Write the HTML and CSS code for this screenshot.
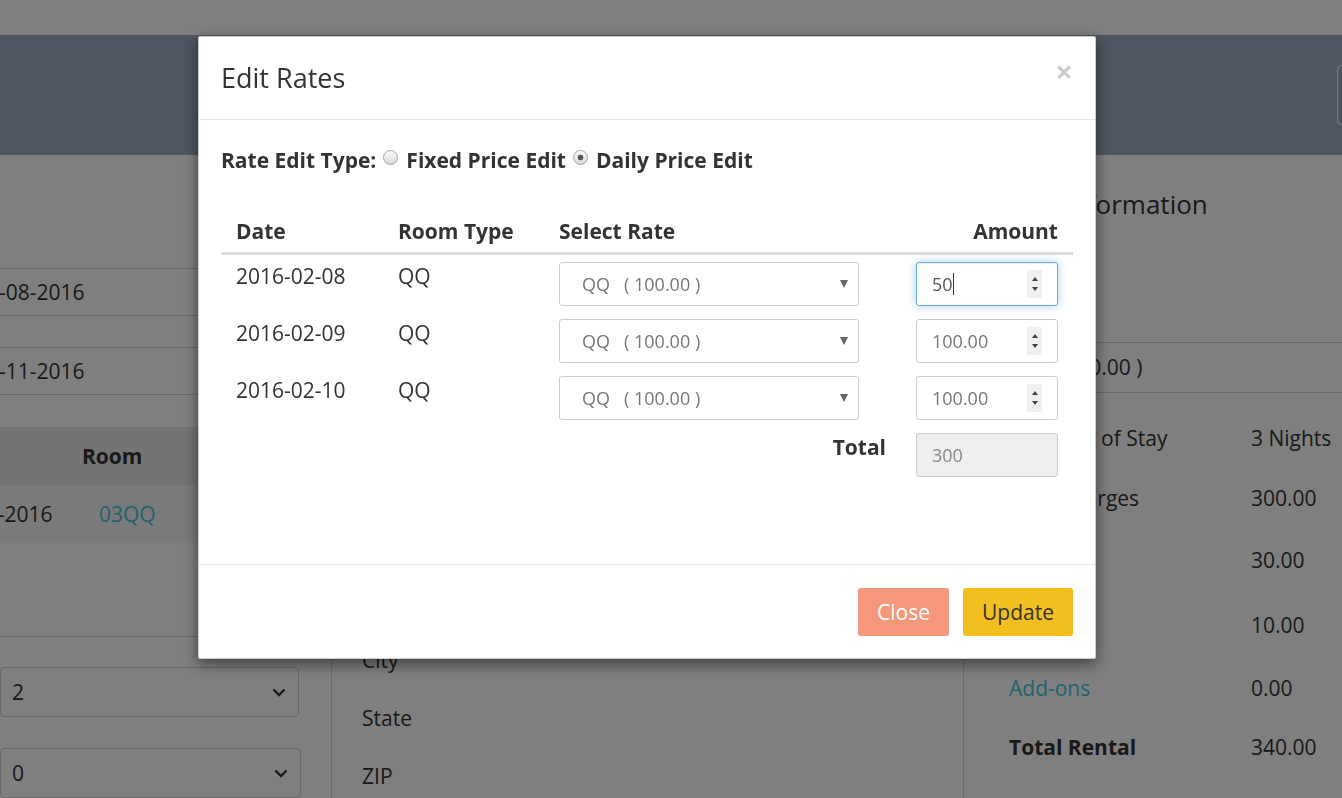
FILE: index.html
```html
<!DOCTYPE html>
<html lang="en">
<head>
<meta charset="utf-8">
<title>Edit Rates</title>
<link rel="stylesheet" href="styles.css">
</head>
<body>
<div class="page">
  <div class="topbar"></div>
  <div class="banner">
    <button class="banner-btn" aria-label="Check out"></button>
  </div>
  <div class="main">
    <div class="col-left">
      <div class="date-field">02-08-2016</div>
      <div class="date-field second">02-11-2016</div>
      <div class="ltable">
        <div class="lth">Date</div>
        <div class="lth room">Room</div>
        <div class="ltd">02-08-2016</div>
        <div class="ltd room"><a class="link">03QQ</a></div>
      </div>
      <div class="sep"></div>
      <div class="lselect">
        <span>2</span>
        <svg class="chev" width="14" height="9" viewBox="0 0 14 9"><polyline points="1.5,1.5 7,7 12.5,1.5" fill="none" stroke="#333" stroke-width="2.4"/></svg>
      </div>
      <div class="lselect second">
        <span>0</span>
        <svg class="chev" width="14" height="9" viewBox="0 0 14 9"><polyline points="1.5,1.5 7,7 12.5,1.5" fill="none" stroke="#333" stroke-width="2.4"/></svg>
      </div>
    </div>
    <div class="col-mid">
      <h3 class="col-heading">Guest Information</h3>
      <div class="mid-list">
        <div class="mid-row">First Name</div>
        <div class="mid-row">Last Name</div>
        <div class="mid-row">Email</div>
        <div class="mid-row">Phone</div>
        <div class="mid-row">Address</div>
        <div class="mid-row">City</div>
        <div class="mid-row">State</div>
        <div class="mid-row">ZIP</div>
      </div>
    </div>
    <div class="col-right">
      <h3 class="col-heading right">Rental Information</h3>
      <div class="rate-box">QQ&nbsp;&nbsp;( 100.00 )</div>
      <div class="summary">
        <div>Duration of Stay</div><div>3 Nights</div>
        <div>Rent Charges</div><div>300.00</div>
        <div>Tax</div><div>30.00</div>
        <div>Fees</div><div>10.00</div>
        <div><a class="link">Add-ons</a></div><div>0.00</div>
        <div class="strong">Total Rental</div><div>340.00</div>
      </div>
    </div>
  </div>
</div>

<div class="backdrop"></div>

<div class="modal">
  <div class="modal-content">
    <div class="modal-header">
      <h4 class="modal-title">Edit Rates</h4>
      <button class="close" type="button">&times;</button>
    </div>
    <div class="modal-body">
      <div class="edit-type">
        <span>Rate Edit Type:</span>
        <input type="radio" name="type" class="radio">
        <span>Fixed Price Edit</span>
        <input type="radio" name="type" class="radio" checked>
        <span>Daily Price Edit</span>
      </div>
      <table class="rates">
        <colgroup>
          <col class="c-date"><col class="c-room"><col class="c-rate"><col class="c-amt">
        </colgroup>
        <thead>
          <tr><th>Date</th><th>Room Type</th><th>Select Rate</th><th class="right">Amount</th></tr>
        </thead>
        <tbody>
          <tr>
            <td>2016-02-08</td><td>QQ</td>
            <td><div class="select-wrap"><select class="rate-select"><option>QQ&nbsp;&nbsp;&nbsp;( 100.00 )</option></select></div></td>
            <td><div class="num-wrap"><input type="number" class="amount focused" value="50"><span class="caret"></span><span class="spin"><i class="up"></i><i class="down"></i></span></div></td>
          </tr>
          <tr>
            <td>2016-02-09</td><td>QQ</td>
            <td><div class="select-wrap"><select class="rate-select"><option>QQ&nbsp;&nbsp;&nbsp;( 100.00 )</option></select></div></td>
            <td><div class="num-wrap"><input type="number" class="amount" value="100.00"><span class="spin"><i class="up"></i><i class="down"></i></span></div></td>
          </tr>
          <tr>
            <td>2016-02-10</td><td>QQ</td>
            <td><div class="select-wrap"><select class="rate-select"><option>QQ&nbsp;&nbsp;&nbsp;( 100.00 )</option></select></div></td>
            <td><div class="num-wrap"><input type="number" class="amount" value="100.00"><span class="spin"><i class="up"></i><i class="down"></i></span></div></td>
          </tr>
          <tr>
            <td></td><td></td>
            <td class="total-label">Total</td>
            <td><input type="text" class="amount total" value="300" disabled></td>
          </tr>
        </tbody>
      </table>
    </div>
    <div class="modal-footer">
      <button class="btn btn-close" type="button">Close</button>
      <button class="btn btn-update" type="button">Update</button>
    </div>
  </div>
</div>
</body>
</html>
```

FILE: styles.css
```css
* { box-sizing: border-box; }

html, body {
  margin: 0;
  padding: 0;
}

body {
  width: 1342px;
  height: 798px;
  overflow: hidden;
  font-family: "Open Sans", "Noto Sans", sans-serif;
  font-size: 21px;
  color: #333;
  background: #fff;
}

.page {
  width: 1342px;
  height: 798px;
  overflow: hidden;
}

.topbar {
  height: 35px;
  background: #fff;
}

.banner {
  height: 120px;
  background: #9caec0;
  display: flex;
  align-items: center;
  justify-content: flex-end;
  overflow: hidden;
}

.banner-btn {
  width: 110px;
  height: 60px;
  margin-right: -105px;
  flex: 0 0 auto;
  border: 1px solid #f4f6f8;
  border-radius: 5px;
  background: transparent;
}

.main {
  display: flex;
  height: 643px;
}

/* left column */
.col-left {
  flex: 0 0 331px;
  width: 331px;
}

.date-field {
  margin-top: 113px;
  margin-left: -38px;
  width: 340px;
  height: 48px;
  border: 1px solid #d5d5d5;
  padding-left: 12px;
  line-height: 46px;
  white-space: nowrap;
}

.date-field.second {
  margin-top: 31px;
}

.ltable {
  margin-top: 32px;
  margin-left: -72px;
  display: grid;
  grid-template-columns: 154px 202px;
}

.lth, .ltd {
  height: 58px;
  line-height: 58px;
  padding-left: 15px;
  white-space: nowrap;
}

.lth {
  background: #e8e8e8;
  font-weight: 700;
}

.lth.room { padding-left: 0; }
.ltd.room { padding-left: 17px; }

.ltd {
  background: #f5f5f5;
}

.link {
  color: #3ec6e2;
  text-decoration: none;
}

.sep {
  margin-top: 93px;
  border-top: 1px solid #d5d5d5;
  width: 331px;
}

.lselect {
  margin-top: 30px;
  width: 299px;
  height: 50px;
  border: 1px solid #d0d0d0;
  border-radius: 4px;
  display: flex;
  align-items: center;
  justify-content: space-between;
  padding: 0 12px 0 11px;
}

.lselect.second {
  margin-top: 31px;
  width: 301px;
}

.chev { display: block; }

/* middle column */
.col-mid {
  flex: 0 0 632px;
  border-left: 1px solid #d5d5d5;
  padding-left: 30px;
}

.col-heading {
  margin: 30px 0 0;
  height: 40px;
  line-height: 40px;
  font-size: 26px;
  font-weight: 400;
  white-space: nowrap;
}

.mid-list {
  margin-top: 116px;
}

.mid-row {
  height: 58px;
  line-height: 58px;
}

/* right column */
.col-right {
  flex: 1 1 auto;
  border-left: 1px solid #d5d5d5;
  padding-left: 45px;
  min-width: 0;
}

.col-heading.right {
  margin-left: -29px;
  margin-top: 29px;
}

.rate-box {
  margin-top: 118px;
  margin-left: -12px;
  margin-right: -30px;
  height: 51px;
  border: 1px solid #d5d5d5;
  padding-left: 12px;
  line-height: 49px;
  white-space: nowrap;
}

.summary {
  margin-top: 15px;
  display: grid;
  grid-template-columns: 242px 1fr;
  grid-template-rows: 59px 61px 64px 65px 61px 58px;
  align-items: center;
  white-space: nowrap;
}

.summary .strong { font-weight: 700; }

/* backdrop */
.backdrop {
  position: fixed;
  inset: 0;
  background: rgba(0, 0, 0, 0.5);
}

/* modal */
.modal {
  position: fixed;
  left: 198px;
  top: 36px;
  width: 898px;
}

.modal-content {
  background: #fff;
  border: 1px solid rgba(0, 0, 0, 0.2);
  border-radius: 2px;
  box-shadow: 0 5px 15px rgba(0, 0, 0, 0.5);
}

.modal-header {
  display: flex;
  justify-content: space-between;
  align-items: flex-start;
  padding: 21px 22px 22px;
  border-bottom: 1px solid #e5e5e5;
}

.modal-title {
  margin: 0;
  font-size: 27px;
  font-weight: 400;
  line-height: 39px;
  color: #333;
}

.close {
  margin: -2px 0 0 0;
  padding: 0;
  border: 0;
  background: transparent;
  font-family: inherit;
  font-size: 31px;
  font-weight: 700;
  line-height: 1;
  color: #000;
  opacity: 0.2;
  cursor: pointer;
}

.modal-body {
  padding: 26px 22px 22px;
}

.edit-type {
  display: flex;
  align-items: center;
  height: 28px;
  font-weight: 700;
  white-space: nowrap;
}

.radio {
  appearance: none;
  -webkit-appearance: none;
  width: 15px;
  height: 15px;
  margin: 0 8px 5px 7px;
  border: 1px solid #a3a3a3;
  border-radius: 50%;
  background: linear-gradient(#fdfdfd, #d8d8d8);
  flex: 0 0 auto;
}

.radio:checked {
  background: radial-gradient(circle, #555 0 2.6px, transparent 3.2px), linear-gradient(#fdfdfd, #d8d8d8);
}

.rates {
  width: 852px;
  margin: 36px 0 59px;
  border-collapse: collapse;
  table-layout: fixed;
}

.c-date { width: 162px; }
.c-room { width: 161px; }
.c-rate { width: 357px; }
.c-amt  { width: 172px; }

.rates th {
  text-align: left;
  font-weight: 700;
  padding: 8px 15px;
  line-height: 26px;
  border-bottom: 3px solid #ddd;
  white-space: nowrap;
}

.rates th.right { text-align: right; }

.rates td {
  padding: 7px 15px 6px;
  line-height: 26px;
  vertical-align: top;
  white-space: nowrap;
}

.rates td:first-child,
.rates td:nth-child(2) {
  padding-top: 8px;
}

.total-label {
  text-align: right;
  font-weight: 700;
  padding-top: 8px !important;
}

.select-wrap {
  position: relative;
  width: 300px;
}

.select-wrap::after {
  content: "";
  position: absolute;
  right: 11px;
  top: 18px;
  border-left: 4px solid transparent;
  border-right: 4px solid transparent;
  border-top: 8px solid #666;
  pointer-events: none;
}

.rate-select {
  appearance: none;
  -webkit-appearance: none;
  display: block;
  width: 300px;
  height: 44px;
  border: 1px solid #ccc;
  border-radius: 3px;
  background: #fff;
  padding: 0 0 0 22px;
  font-family: inherit;
  font-size: 18px;
  color: #777;
}

.num-wrap {
  position: relative;
  width: 142px;
}

.amount {
  display: block;
  width: 142px;
  height: 44px;
  border: 1px solid #ccc;
  border-radius: 3px;
  background: #fff;
  padding: 0 15px;
  font-family: inherit;
  font-size: 18px;
  color: #777;
  outline: none;
  -moz-appearance: textfield;
}

.amount::-webkit-inner-spin-button,
.amount::-webkit-outer-spin-button {
  -webkit-appearance: none;
  margin: 0;
}

.amount.focused {
  border-color: #66afe9;
  color: #555;
  box-shadow: inset 0 1px 1px rgba(0, 0, 0, 0.075), 0 0 8px rgba(102, 175, 233, 0.6);
}

.caret {
  position: absolute;
  left: 37px;
  top: 11px;
  width: 1px;
  height: 22px;
  background: #333;
}

.amount.total {
  background: #eee;
  color: #888;
}

.spin {
  position: absolute;
  right: 16px;
  top: 8px;
  width: 15px;
  height: 28px;
  background: #f0f0f0;
  display: flex;
  flex-direction: column;
  align-items: center;
  justify-content: center;
  gap: 6px;
}

.spin .up {
  border-left: 3.5px solid transparent;
  border-right: 3.5px solid transparent;
  border-bottom: 4px solid #444;
}

.spin .down {
  border-left: 3.5px solid transparent;
  border-right: 3.5px solid transparent;
  border-top: 4px solid #444;
}

.modal-footer {
  display: flex;
  justify-content: flex-end;
  gap: 14px;
  padding: 23px 22px 22px 22px;
  border-top: 1px solid #e5e5e5;
}

.btn {
  height: 48px;
  padding: 0 19px;
  border: 0;
  border-radius: 3px;
  font-family: inherit;
  font-size: 21px;
  line-height: 48px;
}

.btn-close {
  background: #f5977a;
  color: #fff;
}

.btn-update {
  background: #f3be1f;
  color: #333;
}
```
